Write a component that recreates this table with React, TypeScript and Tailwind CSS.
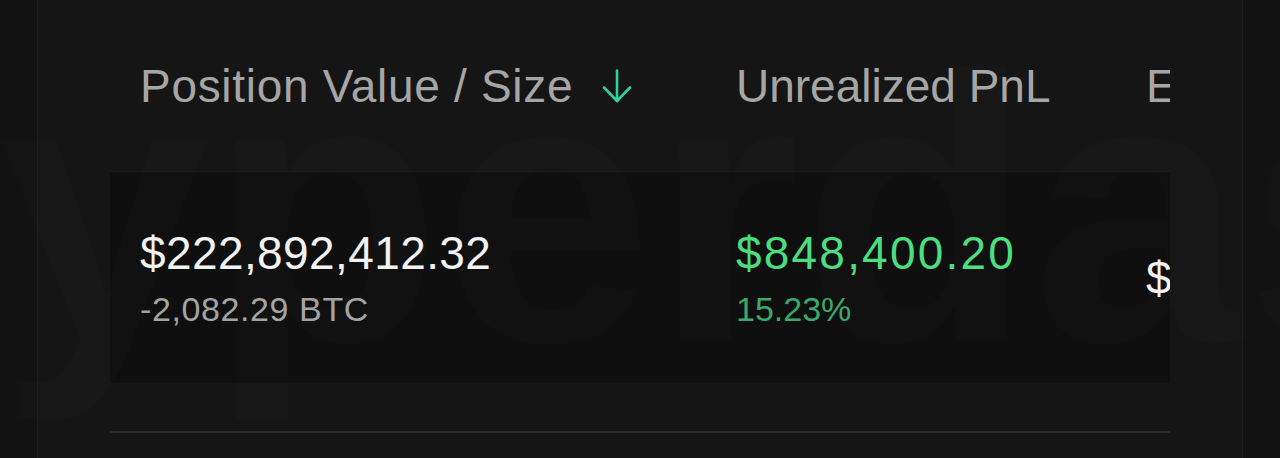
function SortArrow() {
  return (
    <svg width="30" height="34" viewBox="0 0 30 34" fill="none" className="shrink-0">
      <path d="M15 1.5V32" stroke="#2fd39a" strokeWidth="2.6" strokeLinecap="round" />
      <path d="M2 18.5L15 32L28 18.5" stroke="#2fd39a" strokeWidth="2.6" strokeLinecap="round" strokeLinejoin="round" />
    </svg>
  )
}

function Cell({
  value,
  sub,
  valueClass,
  subClass,
  width,
}: {
  value: string
  sub?: string
  valueClass: string
  subClass?: string
  width: string
}) {
  return (
    <div className={`flex shrink-0 flex-col ${width}`}>
      <span className={`whitespace-nowrap text-[46px] leading-none ${valueClass}`}>{value}</span>
      {sub && <span className={`mt-4 whitespace-nowrap text-[34px] leading-none ${subClass}`}>{sub}</span>}
    </div>
  )
}

export default function App() {
  return (
    <div
      className="h-[458px] w-full overflow-hidden bg-[#121212] px-[37px]"
      style={{ fontFamily: '"Liberation Sans", Arial, sans-serif' }}
    >
      <div className="relative h-full border-x border-[#1c1c1c] bg-[#151515] px-[72px]">
        <div className="overflow-hidden">
          {/* header */}
          <div className="flex h-[171px] items-center pl-[30px] text-[46px] leading-none text-[#a6a6a6]">
            <div className="flex w-[596px] shrink-0 items-center gap-[29px]">
              <span className="whitespace-nowrap tracking-[0.7px]">Position Value / Size</span>
              <SortArrow />
            </div>
            <div className="w-[410px] shrink-0 whitespace-nowrap">Unrealized PnL</div>
            <div className="shrink-0 whitespace-nowrap">Entry Price</div>
          </div>

          {/* row */}
          <div className="flex h-[212px] items-center border-t border-[#1b1b1b] bg-[#0f0f0f] pl-[30px]">
            <Cell
              width="w-[596px]"
              value="$222,892,412.32"
              sub="-2,082.29 BTC"
              valueClass="tracking-[0.4px] text-[#f2f2f2]"
              subClass="tracking-[0.6px] text-[#a3a3a3]"
            />
            <Cell
              width="w-[410px]"
              value="$848,400.20"
              sub="15.23%"
              valueClass="tracking-[2.2px] text-[#4ade80]"
              subClass="text-[#3aa86a]"
            />
            <Cell width="w-[300px]" value="$107,045.12" valueClass="text-[#f2f2f2]" />
          </div>

          <div className="h-[48px]" />
          <div className="h-[2px] bg-[#2b2b2b]" />
        </div>

        {/* faint watermark */}
        <div className="pointer-events-none absolute left-[-40px] top-[20px] select-none whitespace-nowrap text-[380px] font-bold leading-none text-white/[0.01]">
          yperdash
        </div>
      </div>
    </div>
  )
}
